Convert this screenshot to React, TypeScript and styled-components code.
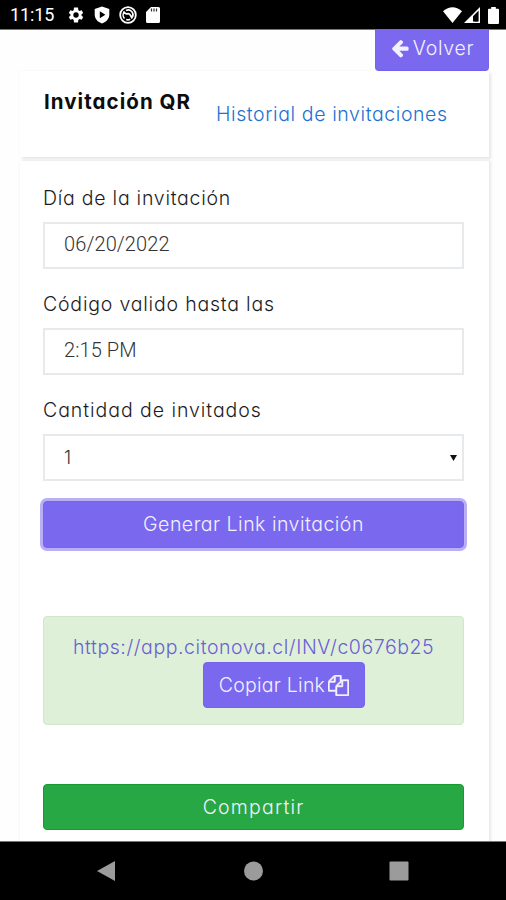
import React from "react";
import styled, { createGlobalStyle } from "styled-components";

const GlobalStyle = createGlobalStyle`
  *, *::before, *::after { box-sizing: border-box; }
  body {
    margin: 0;
    background: #fff;
    color: #1c1c1f;
    font-family: Inter, "Open Sans", sans-serif;
    font-feature-settings: "cv11", "ss03";
    font-weight: 300;
    font-size: 19.5px;
  }
`;

const Screen = styled.div`
  width: 506px;
  height: 900px;
  display: flex;
  flex-direction: column;
  overflow: hidden;
  background: #fefefe;
`;

const StatusBar = styled.header`
  height: 30px;
  flex: none;
  display: flex;
  justify-content: space-between;
  padding: 1px 7px 0 10px;
  background: #000;
  border-bottom: 1px solid #777;
  color: #fff;
`;

const StatusGroup = styled.div<{ $gap: number }>`
  display: flex;
  align-items: center;
  gap: ${(p) => p.$gap}px;
  svg { display: block; flex: none; }
`;

const Clock = styled.span`
  width: 45px;
  margin-right: 3px;
  font: 400 18px/30px Roboto, sans-serif;
  letter-spacing: -0.1px;
  white-space: nowrap;
`;

const Page = styled.main`
  height: 811px;
  flex: none;
  display: flex;
  flex-direction: column;
  padding: 0 17px 0 20px;
  overflow: hidden;
`;

const Label = styled.span<{ $spacing?: number }>`
  letter-spacing: ${(p) => p.$spacing ?? 0}px;
  white-space: nowrap;
`;

const Button = styled.button`
  display: flex;
  align-items: center;
  justify-content: center;
  border: 1px solid #7565ed;
  border-radius: 4px;
  background: #7a69ee;
  color: #f4f1ff;
  font: inherit;
  font-feature-settings: inherit;
  padding: 0;
  svg { display: block; flex: none; }
`;

const BackButton = styled(Button)`
  width: 114px;
  height: 41px;
  flex: none;
  align-self: flex-end;
  gap: 3px;
  padding-bottom: 4px;
  border-top: 0;
  border-radius: 0 0 4px 4px;
`;

const HeaderCard = styled.section`
  height: 86px;
  flex: none;
  display: flex;
  gap: 25px;
  padding: 17px 24px 0;
  background: #fff;
  box-shadow: 2px 2px 3px rgba(0, 0, 0, 0.1), -1px -1px 2px rgba(0, 0, 0, 0.02);
`;

const Title = styled.h1`
  width: 147px;
  margin: 0;
  font-size: 20.5px;
  font-weight: 650;
  line-height: 28px;
  color: #0d0d0d;
`;

const HistoryLink = styled.a`
  margin-top: 12px;
  line-height: 28px;
  color: #2170d2;
`;

const FormCard = styled.section`
  height: 700px;
  flex: none;
  display: flex;
  flex-direction: column;
  margin-top: 4px;
  padding: 24px 25px 0 23px;
  background: #fff;
  box-shadow: 2px 0 3px rgba(0, 0, 0, 0.09), -1px 0 2px rgba(0, 0, 0, 0.03);
`;

const Field = styled.label`
  height: 106px;
  flex: none;
  display: flex;
  flex-direction: column;
  line-height: 27px;
`;

const Control = styled.div`
  height: 47px;
  display: flex;
  align-items: center;
  justify-content: space-between;
  margin-top: 10px;
  padding: 0 5px 3px 19px;
  border: 2px solid #e7eaec;
  color: #333;
  font: 300 20px/27px Roboto, sans-serif;
  svg { display: block; }
`;

const SelectControl = styled(Control)`
  padding-bottom: 0;
  font-family: Inter, sans-serif;
  font-size: 18px;
`;

const GenerateButton = styled(Button)`
  height: 47px;
  flex: none;
  margin: -2px 0 0;
  padding-bottom: 2px;
  box-shadow: 0 0 0 3px #b9aff7;
`;

const Alert = styled.div`
  height: 109px;
  flex: none;
  display: flex;
  flex-direction: column;
  margin-top: 68px;
  padding: 16px 0 0 29px;
  border: 1px solid #cfe8ca;
  border-radius: 4px;
  background: #dff0d8;
  line-height: 29px;
  color: #6a5fd6;
`;

const CopyButton = styled(Button)`
  width: 162px;
  height: 46px;
  margin-left: 130px;
  gap: 3px;
`;

const ShareButton = styled(Button)`
  height: 46px;
  flex: none;
  margin-top: 59px;
  border-color: #179b2b;
  background: #28a745;
`;

const NavBar = styled.nav`
  height: 59px;
  flex: none;
  display: flex;
  justify-content: space-between;
  align-items: center;
  padding: 0 97px;
  border-top: 1px solid #777;
  background: #000;
  color: #9b9b9b;
  svg { display: block; }
`;

const Gear = () => (
  <svg width="18" height="18" viewBox="0 0 24 24" fill="currentColor">
    <path fillRule="evenodd" d="M19.4 13a7.500 7.500 0 0 0 0-2l2.200-1.700-2.100-3.700-2.700 1a8 8 0 0 0-1.700-1L14.700 2H9.300l-.4 3.600a8 8 0 0 0-1.700 1l-2.700-1-2.100 3.700L4.600 11a7.500 7.500 0 0 0 0 2l-2.200 1.700 2.100 3.700 2.700-1a8 8 0 0 0 1.700 1l.4 3.600h5.400l.4-3.600a8 8 0 0 0 1.700-1l2.700 1 2.100-3.700zM12 15.600a3.600 3.600 0 1 1 0-7.200 3.600 3.600 0 0 1 0 7.200z" />
  </svg>
);

const Shield = () => (
  <svg width="16" height="18" viewBox="0 0 16 18" fill="currentColor">
    <path fillRule="evenodd" d="M8 .5 15.300 3v5.500c0 4.300-3 7.500-7.300 9-4.300-1.500-7.300-4.700-7.300-9V3zM5.800 5.200v7L11.400 8.700z" />
  </svg>
);

const SyncCircle = () => (
  <svg width="18" height="18" viewBox="0 0 18 18" fill="none" stroke="currentColor">
    <circle cx="9" cy="9" r="7.800" strokeWidth="1.800" />
    <path d="M5.500 12.500A4.800 4.800 0 0 1 5.300 6M7 4.500a4.800 4.800 0 0 1 6.300 6.700M11.200 13.200a4.800 4.800 0 0 1-4 .3" strokeWidth="1.600" />
    <path d="M4.500 5.500q1.800 3 4 2.300t4.700 4.700" strokeWidth="1.800" />
  </svg>
);

const SdCard = () => (
  <svg width="14" height="16" viewBox="0 0 14 16" fill="currentColor">
    <path d="M5 0h7.500A1.500 1.500 0 0 1 14 1.500v13a1.500 1.500 0 0 1-1.500 1.500h-11A1.500 1.500 0 0 1 0 14.500V5z" />
    <path d="M5.500 1.500v3M8 1.500v3M10.500 1.500v3" stroke="#333" strokeWidth="1.200" />
  </svg>
);

const Wifi = () => (
  <svg width="19" height="16" viewBox="0 0 19 16" fill="currentColor">
    <path d="M0 4.200Q9.500-3.800 19 4.200L9.500 16z" />
  </svg>
);

const Signal = () => (
  <svg width="16" height="16" viewBox="0 0 16 16" fill="currentColor">
    <path fillRule="evenodd" d="M16 0v16H0zM14.600 3.600 9 9.200v5.400h5.600z" />
    <path d="M10.600 8.500h3v6h-3z" fill="#000" />
  </svg>
);

const Battery = () => (
  <svg width="11" height="17" viewBox="0 0 11 17" fill="currentColor">
    <path d="M3.200 0h4.600v1.700h2.200a1 1 0 0 1 1 1V16a1 1 0 0 1-1 1H1a1 1 0 0 1-1-1V2.700a1 1 0 0 1 1-1h2.200z" />
  </svg>
);

const ArrowLeft = () => (
  <svg width="20" height="20" viewBox="0 0 1792 1792" fill="currentColor">
    <path d="M1664 896v128q0 53-32.500 90.500t-84.500 37.500h-704l293 294q38 36 38 90t-38 90l-75 76q-37 37-90 37-52 0-91-37l-651-652q-37-37-37-90 0-52 37-91l651-650q38-38 91-38 52 0 90 38l75 74q38 38 38 91t-38 91l-293 293h704q52 0 84.500 37.500t32.500 90.500z" />
  </svg>
);

const Files = () => (
  <svg width="21" height="21" viewBox="0 0 1792 1792" fill="currentColor" stroke="currentColor" strokeWidth="40">
    <path d="M1696 384q40 0 68 28t28 68v1216q0 40-28 68t-68 28h-960q-40 0-68-28t-28-68v-288h-544q-40 0-68-28t-28-68v-672q0-40 20-88t48-76l408-408q28-28 76-48t88-20h416q40 0 68 28t28 68v328q68-40 128-40h416zm-544 213l-299 299h299v-299zm-640-384l-299 299h299v-299zm196 647l316-316v-416h-384v416q0 40-28 68t-68 28h-416v640h512v-256q0-40 20-88t48-76zm956 804v-1152h-384v416q0 40-28 68t-68 28h-416v640h896z" />
  </svg>
);

const BatterySpacer = styled.span`
  width: 4px;
`;

export default function App() {
  return (
    <>
      <GlobalStyle />
      <Screen>
        <StatusBar>
          <StatusGroup $gap={9}>
            <Clock>11:15</Clock>
            <Gear />
            <Shield />
            <SyncCircle />
            <SdCard />
          </StatusGroup>
          <StatusGroup $gap={2}>
            <Wifi />
            <Signal />
            <BatterySpacer />
            <Battery />
          </StatusGroup>
        </StatusBar>

        <Page>
          <BackButton>
            <ArrowLeft />
            <Label $spacing={0.7}>Volver</Label>
          </BackButton>

          <HeaderCard>
            <Title><Label $spacing={1.05}>Invitación QR</Label></Title>
            <HistoryLink><Label $spacing={0.6}>Historial de invitaciones</Label></HistoryLink>
          </HeaderCard>

          <FormCard>
            <Field>
              <Label $spacing={0.75}>Día de la invitación</Label>
              <Control><Label $spacing={0.1}>06/20/2022</Label></Control>
            </Field>
            <Field>
              <Label $spacing={0.8}>Código valido hasta las</Label>
              <Control><Label $spacing={0.1}>2:15 PM</Label></Control>
            </Field>
            <Field>
              <Label $spacing={0.95}>Cantidad de invitados</Label>
              <SelectControl>
                <Label>1</Label>
                <svg width="7" height="6" viewBox="0 0 7 6"><path d="M0 0h7L3.500 6z" fill="#111" /></svg>
              </SelectControl>
            </Field>
            <GenerateButton><Label $spacing={0.5}>Generar Link invitación</Label></GenerateButton>

            <Alert>
              <Label $spacing={0.57}>https://app.citonova.cl/INV/c0676b25</Label>
              <CopyButton>
                <Label $spacing={0.25}>Copiar Link</Label>
                <Files />
              </CopyButton>
            </Alert>

            <ShareButton><Label $spacing={1.2}>Compartir</Label></ShareButton>
          </FormCard>
        </Page>

        <NavBar>
          <svg width="20" height="20" viewBox="0 0 20 20"><path d="M18 0v20L0 10z" fill="currentColor" /></svg>
          <svg width="20" height="20" viewBox="0 0 20 20"><circle cx="10.500" cy="10" r="9.500" fill="currentColor" /></svg>
          <svg width="20" height="20" viewBox="0 0 20 20"><rect x=".5" y=".5" width="19" height="19" rx="1" fill="currentColor" /></svg>
        </NavBar>
      </Screen>
    </>
  );
}
